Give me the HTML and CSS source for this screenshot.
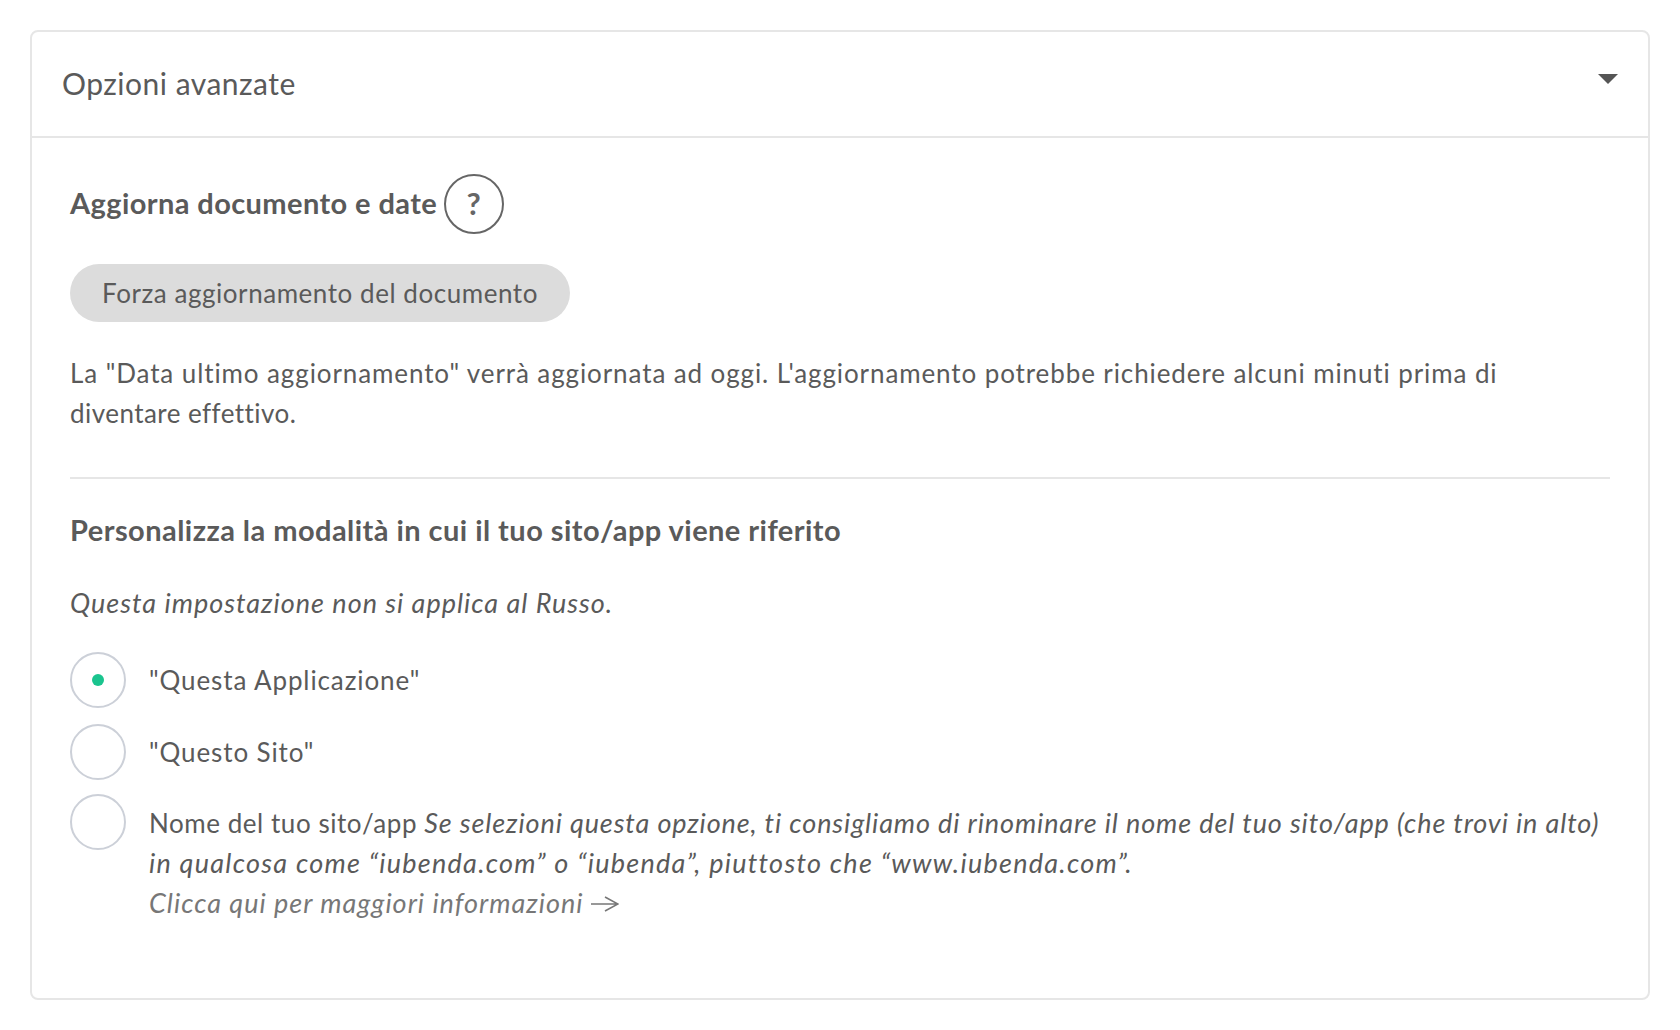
FILE: index.html
```html
<!DOCTYPE html>
<html lang="en">

<head>
    <meta charset="UTF-8">
    <title>Opzioni avanzate</title>
    <link rel="stylesheet" href="styles.css">
</head>

<body>
    <div class="card">
        <div class="card-head">
            <span class="card-title">Opzioni avanzate</span>
            <span class="caret"></span>
        </div>
        <div class="card-body">
            <div class="title-row">
                <h3 class="update-title">Aggiorna documento e date</h3>
                <span class="help">?</span>
            </div>
            <div class="btn">Forza aggiornamento del documento</div>
            <p class="note">La "Data ultimo aggiornamento" verrà aggiornata ad oggi. L'aggiornamento potrebbe richiedere alcuni minuti prima di <span class="note-end">diventare effettivo.</span></p>
            <hr class="line">
            <h3 class="custom-title">Personalizza la modalità in cui il tuo sito/app viene riferito</h3>
            <p class="hint">Questa impostazione non si applica al Russo.</p>
            <div class="option first">
                <span class="radio checked"></span>
                <span class="option-text">"Questa Applicazione"</span>
            </div>
            <div class="option second">
                <span class="radio"></span>
                <span class="option-text">"Questo Sito"</span>
            </div>
            <div class="option third">
                <span class="radio"></span>
                <div class="option-text long">
                    <div>Nome del tuo sito/app <em>Se selezioni questa opzione, ti consigliamo di rinominare il nome del tuo sito/app (che trovi in alto)</em></div>
                    <div><em class="wide">in qualcosa come “iubenda.com” o “iubenda”, piuttosto che “www.iubenda.com”.</em></div>
                    <div><em class="more">Clicca qui per maggiori informazioni <svg class="arrow" viewBox="0 0 28 16" width="28" height="16"><path d="M0 8H27M14 1L27 8L14 15" fill="none" stroke="#777" stroke-width="1.6"/></svg></em></div>
                </div>
            </div>
        </div>
    </div>
</body>

</html>
```

FILE: styles.css
```css
* {
    box-sizing: border-box;
}

body {
    margin: 0;
    padding: 30px;
    background: #fff;
    color: #5a5a5a;
    font-family: "Lato", "Liberation Sans", sans-serif;
    font-size: 26px;
    line-height: 40px;
    letter-spacing: 0.9px;
}

em {
    font-size: 27px;
    letter-spacing: 0.89px;
}

.card {
    border: 2px solid #e6e6e6;
    border-radius: 8px;
    height: 970px;
}

.card-head {
    display: flex;
    justify-content: space-between;
    height: 106px;
    padding: 31px 30px 0 30px;
    border-bottom: 2px solid #e6e6e6;
}

.card-title {
    font-size: 30px;
    letter-spacing: 0.5px;
}

.caret {
    width: 0;
    height: 0;
    margin-top: 11px;
    border-left: 10px solid transparent;
    border-right: 10px solid transparent;
    border-top: 10px solid #555;
}

.card-body {
    padding: 36px 38px 0 38px;
}

.title-row {
    display: flex;
    align-items: center;
    gap: 7px;
}

h3 {
    margin: 0;
    font-size: 29px;
    font-weight: 700;
    letter-spacing: 0.4px;
}

.update-title {
    margin-bottom: 2px;
}

.help {
    width: 60px;
    height: 60px;
    border: 2px solid #666;
    border-radius: 50%;
    color: #666;
    font-size: 31px;
    font-weight: 700;
    line-height: 54px;
    text-align: center;
}

.btn {
    width: 500px;
    height: 58px;
    margin-top: 30px;
    border-radius: 29px;
    background: #dcdcdc;
    letter-spacing: 0.55px;
    line-height: 58px;
    text-align: center;
}

.note {
    margin: 31px 0 0;
}

.note-end {
    letter-spacing: 0.45px;
}

.line {
    margin: 44px 0 0;
    border: 0;
    border-top: 2px solid #e6e6e6;
}

.custom-title {
    margin-top: 31px;
    letter-spacing: 0.45px;
}

.hint {
    margin: 33px 0 0;
    font-size: 27px;
    font-style: italic;
    letter-spacing: 1px;
}

.option {
    display: flex;
    gap: 23px;
}

.first {
    margin-top: 29px;
    align-items: center;
}

.second {
    margin-top: 16px;
    align-items: center;
}

.third {
    margin-top: 14px;
}

.radio {
    display: flex;
    flex: none;
    align-items: center;
    justify-content: center;
    width: 56px;
    height: 56px;
    border: 2px solid #ccd0d8;
    border-radius: 50%;
}

.checked::after {
    content: "";
    width: 12px;
    height: 12px;
    border-radius: 50%;
    background: #1ac48e;
}

.long {
    margin-top: 9px;
    letter-spacing: 0.55px;
}

.wide {
    letter-spacing: 1.26px;
}

.more {
    color: #777;
    letter-spacing: 1px;
}

.arrow {
    vertical-align: 1px;
}
```
